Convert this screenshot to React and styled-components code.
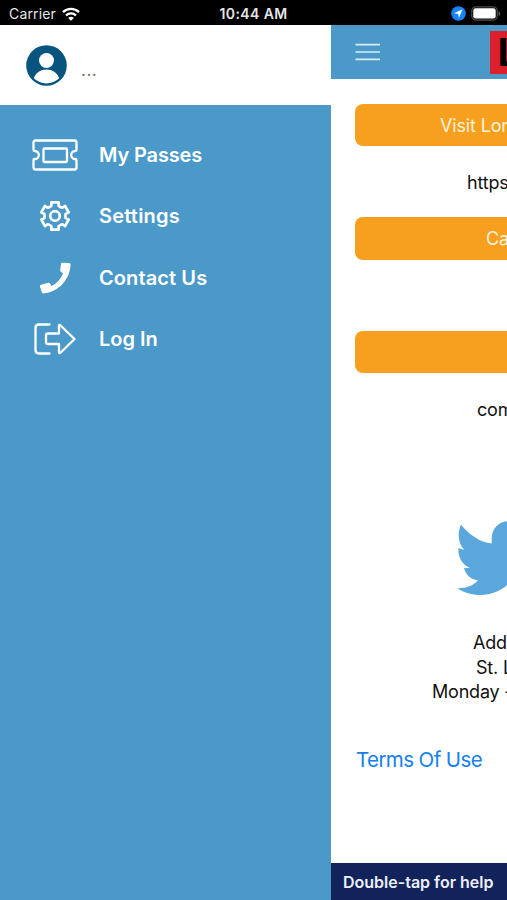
import styled, { createGlobalStyle } from 'styled-components'

const color = {
	primary: '#4a99c9',
	accent: '#f7a01f',
	navy: '#12235b',
	link: '#1580ee',
	bird: '#5aa7dd',
	logo: '#dc202b',
}

const GlobalStyle = createGlobalStyle`
	* {
		box-sizing: border-box;
	}

	body {
		margin: 0;
		overflow: hidden;
		font-family: Inter, "Liberation Sans", sans-serif;
	}

	svg {
		display: block;
		flex-shrink: 0;
	}
`

const Screen = styled.div`
	width: 507px;
	height: 900px;
	display: flex;
	flex-direction: column;
	background: #fff;
	overflow: hidden;
`

const StatusBar = styled.div`
	height: 25px;
	flex-shrink: 0;
	padding: 2px 6px 0 9px;
	display: grid;
	grid-template-columns: 1fr auto 1fr;
	align-items: center;
	background: #000;
	color: #e6e6e6;
`

const StatusGroup = styled.div`
	display: flex;
	align-items: center;
	gap: ${props => props.$gap};
	justify-content: ${props => props.$end ? 'flex-end' : 'flex-start'};
	font-size: 14px;
	letter-spacing: .15px;
`

const Clock = styled.div`
	padding-right: 3px;
	font-size: 14px;
	font-weight: 600;
	letter-spacing: .4px;
`

const Body = styled.div`
	flex: 1;
	min-height: 0;
	display: flex;
`

const Drawer = styled.aside`
	width: 331px;
	flex-shrink: 0;
	background: ${color.primary};
`

const DrawerHeader = styled.div`
	height: 80px;
	padding-left: 26px;
	display: flex;
	align-items: center;
	gap: 14px;
	background: #fff;
	color: #777;
`

const UserName = styled.span`
	font-size: 17px;
	letter-spacing: .5px;
	line-height: 20px;
	padding-top: 9px;
`

const Menu = styled.nav`
	padding-top: 19px;
`

const MenuItem = styled.div`
	height: 61.5px;
	display: flex;
	align-items: center;
	color: #fff;
	font-size: 20px;
	font-weight: 600;
	letter-spacing: ${props => props.$spacing};
`

const IconSlot = styled.div`
	width: 99px;
	padding-left: 11px;
	display: flex;
	justify-content: center;
`

const Main = styled.main`
	flex: 1;
	min-width: 0;
	display: flex;
	flex-direction: column;
	overflow: hidden;
	white-space: nowrap;
`

const TopBar = styled.header`
	height: 54px;
	flex-shrink: 0;
	padding-left: 24px;
	display: flex;
	align-items: center;
	justify-content: space-between;
	background: ${color.primary};
`

const Logo = styled.div`
	width: 17px;
	height: 43px;
	padding-left: 7.5px;
	background: ${color.logo};
	color: #000;
	font-family: "Liberation Sans", sans-serif;
	font-size: 40px;
	font-weight: 700;
	line-height: 43px;
	overflow: hidden;
`

const Content = styled.div`
	flex: 1;
	padding: 24.5px 0 0 24px;
	overflow: hidden;
`

const ActionButton = styled.div`
	height: 42.5px;
	padding-left: ${props => props.$indent || '0'};
	border-radius: 8px 0 0 8px;
	background: ${color.accent};
	color: #fff3dc;
	font-size: 18px;
	line-height: 43px;
	letter-spacing: -.15px;
`

const Detail = styled.div`
	height: 71px;
	padding-left: ${props => props.$indent || '0'};
	font-size: 18px;
	line-height: 73px;
	letter-spacing: -.2px;
	color: #111;
`

const Social = styled.div`
	padding: 77px 0 0 102px;
	color: ${color.bird};
`

const Address = styled.div`
	padding-top: 35px;
	color: #111;
`

const AddressLine = styled.div`
	padding-left: ${props => props.$indent};
	font-size: 18px;
	line-height: 24.5px;
	letter-spacing: -.2px;
`

const TermsLink = styled.div`
	padding: 41px 0 0 1px;
	color: ${color.link};
	font-size: 20.5px;
	line-height: 28px;
	letter-spacing: -.6px;
`

const HelpBar = styled.footer`
	height: 37px;
	flex-shrink: 0;
	padding-left: 12px;
	background: ${color.navy};
	color: #edf0f8;
	font-size: 16px;
	font-weight: 600;
	line-height: 38px;
`

const WifiIcon = () => (
	<svg width="18" height="14" viewBox="0 0 18 14" fill="none" stroke="#fff" strokeWidth="2.4">
		<path d="M1 5.2a11.4 11.4 0 0 1 16 0" />
		<path d="M4 8.5a7 7 0 0 1 10 0" />
		<path d="M9 13.8 6.2 11a4 4 0 0 1 5.6 0z" fill="#fff" stroke="none" />
	</svg>
)

const LocationIcon = () => (
	<svg width="15" height="15" viewBox="0 0 15 15">
		<circle cx="7.5" cy="7.5" r="7.3" fill="#1683f7" />
		<path d="M11.6 3.3 3 7.2l4.2.7.7 4.2z" fill="#fff" />
	</svg>
)

const BatteryIcon = () => (
	<svg width="30" height="15" viewBox="0 0 30 15">
		<rect x=".8" y=".8" width="25.4" height="13.2" rx="4" fill="none" stroke="#484848" strokeWidth="1.3" />
		<rect x="2.3" y="2.3" width="22.4" height="10.2" rx="2.3" fill="#fff" />
		<path d="M27.5 5.2c2.4.8 2.4 4 0 4.8z" fill="#555" />
	</svg>
)

const AvatarIcon = () => (
	<svg width="41" height="41" viewBox="0 0 41 41">
		<circle cx="20.5" cy="20.5" r="20.3" fill="#07557f" />
		<circle cx="20.5" cy="15.5" r="7.5" fill="#fff" />
		<path d="M7.8 33.2c2-5.6 7-8.7 12.7-8.7s10.7 3.1 12.7 8.7a18 18 0 0 1-25.4 0z" fill="#fff" />
	</svg>
)

const TicketIcon = () => (
	<svg width="46" height="32" viewBox="0 0 46 32" fill="none" stroke="#fff" strokeWidth="2.3" strokeLinejoin="round">
		<path d="M3.5 1.5h39q2 0 2 2v7.2q0 1.3-1.3 1.3a4 4 0 0 0 0 8q1.3 0 1.3 1.3v7.2q0 2-2 2h-39q-2 0-2-2v-7.2Q1.5 20 2.8 20a4 4 0 0 0 0-8q-1.3 0-1.3-1.3V3.5q0-2 2-2z" />
		<rect x="11.5" y="9.5" width="23.5" height="13.5" rx="1" />
	</svg>
)

const polar = (radius, degrees) => {
	const angle = degrees * Math.PI / 180
	return `${(16 + radius * Math.sin(angle)).toFixed(2)} ${(16 - radius * Math.cos(angle)).toFixed(2)}`
}

// six teeth, one every 60 degrees
const gearPath = 'M' + [0, 60, 120, 180, 240, 300].map(a => (
	`${polar(10.9, a - 19)}L${polar(14.2, a - 15)}L${polar(14.2, a + 15)}L${polar(10.9, a + 19)}Q${polar(10, a + 30)} ${polar(10.9, a + 41)}`
)).join('L') + 'z'

const GearIcon = () => (
	<svg width="32" height="32" viewBox="0 0 32 32" fill="none" stroke="#fff" strokeWidth="2.7" strokeLinejoin="round">
		<path d={gearPath} />
		<circle cx="16" cy="16" r="4.8" />
	</svg>
)

const PhoneIcon = () => (
	<svg width="32" height="32" viewBox="0 0 32 32" fill="#fff">
		<path d="M23 .7 30 .9Q31.5 1 31.5 2.5C31.2 17.5 19.500 30 4.500 31.500Q3 31.500 2.700 30L.9 24.500Q.6 23.200 2 22.800L9.300 20.700Q10.600 20.400 11.100 21.600L12.300 24C17.500 22 22 17 24 11.300L22 10Q20.900 9.400 21.200 8.200L22 1.700Q22.100.7 23 .7z" />
	</svg>
)

const LoginIcon = () => (
	<svg width="42" height="32" viewBox="0 0 42 32" fill="none" stroke="#fff" strokeWidth="2.3" strokeLinecap="round" strokeLinejoin="round">
		<path d="M15.5 1.5H5q-3.500 0-3.500 3.500v22q0 3.500 3.500 3.500h10.500" />
		<path d="M14 10.500h11V3q0-2 1.500-.5L40.500 16 26.500 29.700q-1.500 1.300-1.500-.7V21H14q-2 0-2-2v-6.500q0-2 2-2z" />
	</svg>
)

const BurgerIcon = () => (
	<svg width="26" height="20" viewBox="0 0 26 20" fill="none" stroke="#d7edf8" strokeWidth="1.7">
		<path d="M.5 2.7h24.500M.5 10h24.500M.5 17.300h24.500" />
	</svg>
)

const BirdIcon = () => (
	<svg width="91" height="75" viewBox="0 0 91 75" fill="currentColor">
		<path d="M4 3.7C12 13.5 23 21.300 34.700 22.400V18C34.700 7 42.500.3 51.500.3c5.500 0 10.300 2.200 13.800 5.800l12-4.500-8.300 10.300 11-3-9.500 9.900C71 45 52 74 23.500 74 15 74 7 71.500.2 67.200 9.500 67.500 15.500 65 21 59.300c-7.500-1-12-5.500-14.100-12.100l6-.4C5.500 43.500 1.200 37 1.300 27.300L7.300 28.700C1.200 22.500 0 12.500 4 3.700z" />
	</svg>
)

const menuItems = [
	{ label: 'My Passes', icon: <TicketIcon />, spacing: '-.15px' },
	{ label: 'Settings', icon: <GearIcon />, spacing: '.2px' },
	{ label: 'Contact Us', icon: <PhoneIcon />, spacing: '.1px' },
	{ label: 'Log In', icon: <LoginIcon />, spacing: '0' },
]

const SideMenu = () => (
	<Drawer>
		<DrawerHeader>
			<AvatarIcon />
			<UserName>...</UserName>
		</DrawerHeader>
		<Menu>
			{menuItems.map(item => (
				<MenuItem key={item.label} $spacing={item.spacing}>
					<IconSlot>{item.icon}</IconSlot>
					{item.label}
				</MenuItem>
			))}
		</Menu>
	</Drawer>
)

const App = () => {
	return (
		<>
			<GlobalStyle />
			<Screen>
				<StatusBar>
					<StatusGroup $gap="6px">Carrier <WifiIcon /></StatusGroup>
					<Clock>10:44 AM</Clock>
					<StatusGroup $gap="5px" $end><LocationIcon /><BatteryIcon /></StatusGroup>
				</StatusBar>
				<Body>
					<SideMenu />
					<Main>
						<TopBar>
							<BurgerIcon />
							<Logo>L</Logo>
						</TopBar>
						<Content>
							<ActionButton $indent="85px">Visit Lon</ActionButton>
							<Detail $indent="112px">https</Detail>
							<ActionButton $indent="131px">Ca</ActionButton>
							<Detail />
							<ActionButton />
							<Detail $indent="122px">com</Detail>
							<Social><BirdIcon /></Social>
							<Address>
								<AddressLine $indent="118px">Add</AddressLine>
								<AddressLine $indent="121px">St. L</AddressLine>
								<AddressLine $indent="77px">Monday -</AddressLine>
							</Address>
							<TermsLink>Terms Of Use</TermsLink>
						</Content>
						<HelpBar>Double-tap for help</HelpBar>
					</Main>
				</Body>
			</Screen>
		</>
	)
}

export default App
